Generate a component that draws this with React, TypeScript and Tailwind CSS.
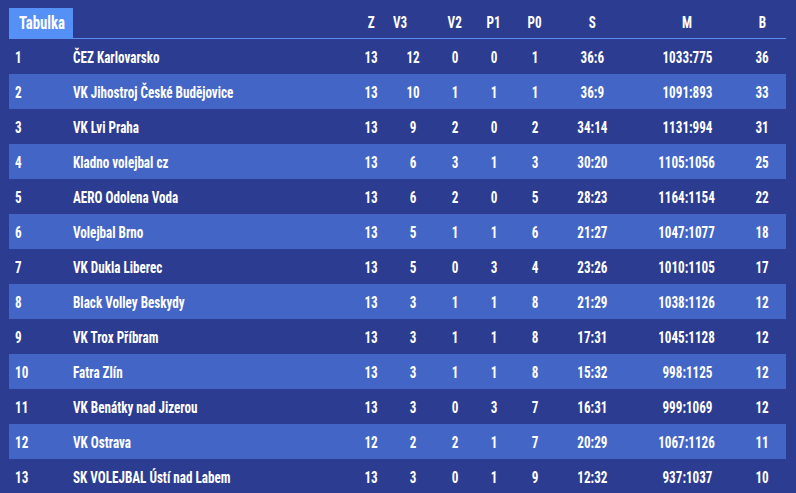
const rows: [number, string, number, number, number, number, number, string, string, number][] = [
  [1, "ČEZ Karlovarsko", 13, 12, 0, 0, 1, "36:6", "1033:775", 36],
  [2, "VK Jihostroj České Budějovice", 13, 10, 1, 1, 1, "36:9", "1091:893", 33],
  [3, "VK Lvi Praha", 13, 9, 2, 0, 2, "34:14", "1131:994", 31],
  [4, "Kladno volejbal cz", 13, 6, 3, 1, 3, "30:20", "1105:1056", 25],
  [5, "AERO Odolena Voda", 13, 6, 2, 0, 5, "28:23", "1164:1154", 22],
  [6, "Volejbal Brno", 13, 5, 1, 1, 6, "21:27", "1047:1077", 18],
  [7, "VK Dukla Liberec", 13, 5, 0, 3, 4, "23:26", "1010:1105", 17],
  [8, "Black Volley Beskydy", 13, 3, 1, 1, 8, "21:29", "1038:1126", 12],
  [9, "VK Trox Příbram", 13, 3, 1, 1, 8, "17:31", "1045:1128", 12],
  [10, "Fatra Zlín", 13, 3, 1, 1, 8, "15:32", "998:1125", 12],
  [11, "VK Benátky nad Jizerou", 13, 3, 0, 3, 7, "16:31", "999:1069", 12],
  [12, "VK Ostrava", 12, 2, 2, 1, 7, "20:29", "1067:1126", 11],
  [13, "SK VOLEJBAL Ústí nad Labem", 13, 3, 0, 1, 9, "12:32", "937:1037", 10],
];

const grid = "grid grid-cols-[64px_277px_42px_42px_42px_36px_46px_68px_122px_28px] pr-[10px] items-center";
const narrow = "inline-block whitespace-nowrap scale-x-[0.82]";

function Cell({ children, left }: { children: React.ReactNode; left?: boolean }) {
  return (
    <div className={left ? "text-left" : "text-center"}>
      <span className={`${narrow} ${left ? "origin-left" : "origin-center"}`}>{children}</span>
    </div>
  );
}

export default function App() {
  return (
    <div
      className="w-[796px] h-[493px] overflow-hidden bg-[#2c3c90] text-white font-bold text-[16px] leading-none pl-[9px] pt-[8px]"
      style={{ fontFamily: "Roboto, sans-serif", fontStretch: "75%" }}
    >
      <div className="w-[777px]">
        <div className={`${grid} h-[31px] border-b border-[#5a90f2]`}>
          <div className="h-full bg-[#5590f6] flex items-center pl-[10px] text-[18px]">
            <span className={`${narrow} origin-left`}>Tabulka</span>
          </div>
          <div />
          <Cell>Z</Cell>
          <div className="pl-[1px]">
            <span className={`${narrow} origin-left`}>V3</span>
          </div>
          <Cell>V2</Cell>
          <Cell>P1</Cell>
          <Cell>P0</Cell>
          <Cell>S</Cell>
          <Cell>M</Cell>
          <Cell>B</Cell>
        </div>
        {rows.map((r) => (
          <div
            key={r[0]}
            className={`${grid} h-[35px] pt-[2px] ${r[0] % 2 === 0 ? "bg-[#4366c6]" : ""}`}
          >
            <div className="pl-[6px]">
              <span className={`${narrow} origin-left`}>{r[0]}</span>
            </div>
            <Cell left>{r[1]}</Cell>
            {r.slice(2).map((v, i) => (
              <Cell key={i}>{v}</Cell>
            ))}
          </div>
        ))}
      </div>
    </div>
  );
}
